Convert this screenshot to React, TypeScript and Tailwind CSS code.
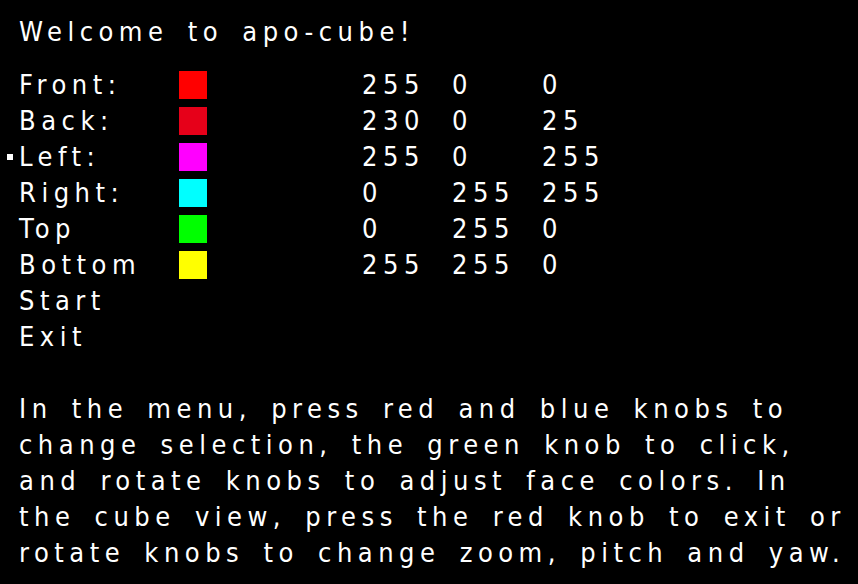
import React from 'react';

type Face = { label: string; color: string; rgb: [number, number, number] };

const FACES: Face[] = [
  { label: 'Front:', color: 'bg-[#ff0000]', rgb: [255, 0, 0] },
  { label: 'Back:', color: 'bg-[#e60019]', rgb: [230, 0, 25] },
  { label: 'Left:', color: 'bg-[#ff00ff]', rgb: [255, 0, 255] },
  { label: 'Right:', color: 'bg-[#00ffff]', rgb: [0, 255, 255] },
  { label: 'Top', color: 'bg-[#00ff00]', rgb: [0, 255, 0] },
  { label: 'Bottom', color: 'bg-[#ffff00]', rgb: [255, 255, 0] },
];

const HELP = [
  'In the menu, press red and blue knobs to',
  'change selection, the green knob to click,',
  'and rotate knobs to adjust face colors. In',
  'the cube view, press the red knob to exit or',
  'rotate knobs to change zoom, pitch and yaw.',
];

const SELECTED = 2;

function Marker({ on }: { on: boolean }) {
  return <span className={`w-[6px] h-[6px] mr-[6px] shrink-0 ${on ? 'bg-white' : ''}`} />;
}

export default function App() {
  return (
    <div className="w-[858px] h-[584px] bg-black text-white overflow-hidden pl-[7px] pt-[14px] text-[27px] leading-[36px] tracking-[5.5px] [word-spacing:6px] font-['DejaVu_Sans_Condensed','DejaVu_Sans',sans-serif] font-stretch-condensed">
      <div className="pl-[12px] h-[40px]">Welcome to apo-cube!</div>

      {/* face colour rows */}
      <div className="mt-[13px] flex flex-col">
        {FACES.map((f, i) => (
          <div key={f.label} className="flex items-center h-[36px]">
            <Marker on={i === SELECTED} />
            <span className="w-[160px]">{f.label}</span>
            <span className={`w-[28px] h-[28px] ${f.color}`} />
            <span className="w-[155px]" />
            {f.rgb.map((v, j) => (
              <span key={j} className="w-[90px]">{v}</span>
            ))}
          </div>
        ))}
        <div className="flex items-center h-[36px]">
          <Marker on={false} />
          <span>Start</span>
        </div>
        <div className="flex items-center h-[36px]">
          <Marker on={false} />
          <span>Exit</span>
        </div>
      </div>

      <div className="mt-[36px] pl-[12px] whitespace-nowrap">
        {HELP.map((line) => (
          <div key={line} className="h-[36px] flex items-center">{line}</div>
        ))}
      </div>
    </div>
  );
}
